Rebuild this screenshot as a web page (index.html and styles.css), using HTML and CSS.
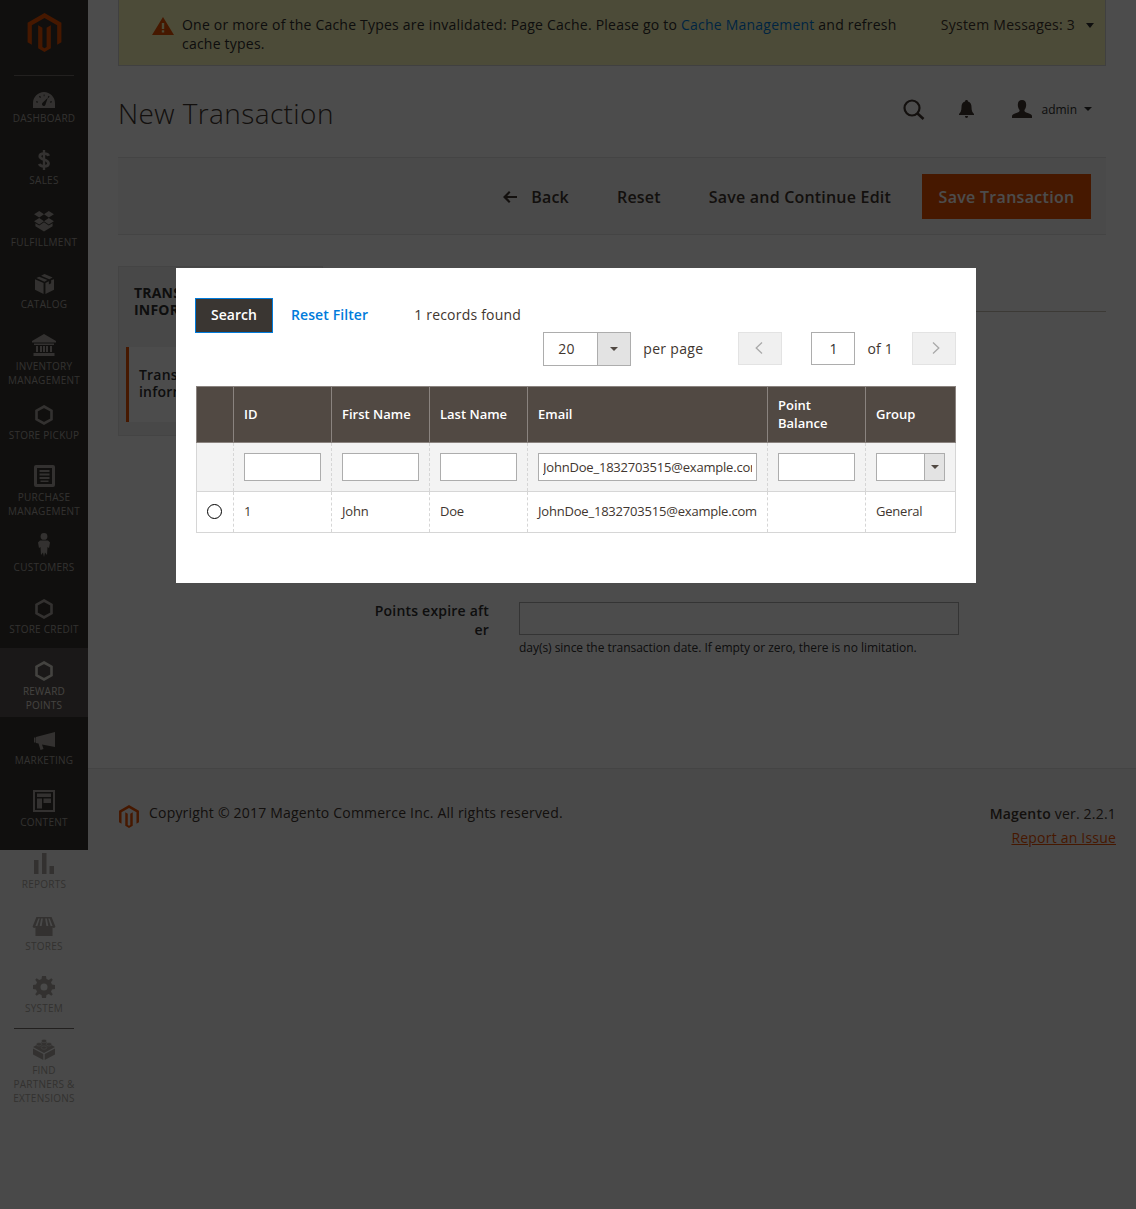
FILE: index.html
```html
<!DOCTYPE html>
<html lang="en">
<head>
    <meta charset="UTF-8">
    <title>New Transaction</title>
    <link rel="stylesheet" href="styles.css">
</head>
<body>
    <nav class="menu">
        <div class="menu-logo">
            <svg width="35" height="39" viewBox="1.6 0 20.8 24"><path class="orange" d="M12 0L22.400 6V18L19.800 19.500V7.500L12 3L4.200 7.500V19.500L1.600 18V6ZM13.300 20.900V9L15.900 7.500V21.700L12 24L8.100 21.700V7.500L10.700 9V20.900L12 21.700Z"/></svg>
        </div>
        <a class="menu-item first">
            <svg class="ico" width="22" height="16" viewBox="0 0 22 16"><path fill-rule="evenodd" d="M11 0C5 0 0 5 0 11V16H22V11C22 5 17 0 11 0ZM6 4.500L7 3.800L8 5.200L7 6ZM10.700 2.500H11.500V4.300H10.700ZM15.600 3.800L16.600 4.600L15.600 6L14.600 5.200ZM18.500 9L19 10.200L17.300 10.800L16.900 9.700ZM3.500 9L5.100 9.700L4.700 10.800L3 10.200ZM14.800 5.800L12.600 12.200A1.800 1.800 0 1 1 9.600 10.800Z"/></svg>
            <span>Dashboard</span>
        </a>
        <a class="menu-item">
            <svg class="ico" width="12" height="20" viewBox="0 0 14 24"><path fill="none" stroke="currentColor" stroke-width="3.400" d="M12.500 7C12 5.200 10 4.400 7 4.400C3.800 4.400 2 5.600 2 7.600C2 12.400 12.400 10.400 12.400 16.200C12.400 18.400 10.400 19.600 7 19.600C4 19.600 2 18.600 1.400 16.600"/><rect x="5.600" y="0" width="2.800" height="24"/></svg>
            <span>Sales</span>
        </a>
        <a class="menu-item">
            <svg class="ico" width="22" height="21" viewBox="0 0 22 22"><path d="M6 0L11 3.400L6 6.800L0.600 3.400ZM16 0L21.400 3.400L16 6.800L11 3.400ZM6 7.400L11 10.800L6 14.200L0.600 10.800ZM16 7.400L21.400 10.800L16 14.200L11 10.800ZM11 11.800L16 15.200L20 12.800V16L11 21.400L2 16V12.800L6 15.200Z"/></svg>
            <span>Fulfillment</span>
        </a>
        <a class="menu-item">
            <svg class="ico" width="19" height="20" viewBox="0 0 20 21"><path d="M10 0L18.600 3.600L15 5.400L6.400 1.800ZM4.400 2.800L13 6.400L10 8L1.400 4.200ZM0 5.400L9 9.400V21L0 16.600ZM20 5.400V16.600L11 21V9.400L14.600 7.600V11L17 9.800V6.600Z"/></svg>
            <span>Catalog</span>
        </a>
        <a class="menu-item">
            <svg class="ico" width="24" height="22" viewBox="0 0 24 22"><path d="M12 0L24 7V8.500H0V7ZM2 9.500H22V11H2ZM4 12H6V18H4ZM8 12H10V18H8ZM14 12H16V18H14ZM18 12H20V18H18ZM11 12H13V18H11ZM1.500 19H22.500V22H1.500Z"/></svg>
            <span>Inventory Management</span>
        </a>
        <a class="menu-item">
            <svg class="ico" width="18" height="20" viewBox="0 0 18 20"><polygon class="hex" points="9,1.500 16.500,5.700 16.500,14.300 9,18.500 1.500,14.300 1.500,5.700"/></svg>
            <span>Store Pickup</span>
        </a>
        <a class="menu-item">
            <svg class="ico" width="21" height="22" viewBox="0 0 21 22"><path fill-rule="evenodd" d="M2 0H19A2 2 0 0 1 21 2V20A2 2 0 0 1 19 22H2A2 2 0 0 1 0 20V2A2 2 0 0 1 2 0ZM3 3V19H18V3ZM5.500 5H15.500V7H5.500ZM5.500 8.500H15.500V10.500H5.500ZM5.500 12H15.500V14H5.500ZM6.500 15.500H14.500V17H6.500Z"/></svg>
            <span>Purchase Management</span>
        </a>
        <a class="menu-item">
            <svg class="ico" width="12" height="24" viewBox="0 0 12 24"><circle cx="6" cy="3.400" r="3.400"/><path d="M2 7.500H10L12 9.500L11 15L9.500 14L9 22L7 19.500L6 24L5 19.500L3 22L2.500 14L1 15L0 9.500Z"/></svg>
            <span>Customers</span>
        </a>
        <a class="menu-item">
            <svg class="ico" width="18" height="20" viewBox="0 0 18 20"><polygon class="hex" points="9,1.500 16.500,5.700 16.500,14.300 9,18.500 1.500,14.300 1.500,5.700"/></svg>
            <span>Store Credit</span>
        </a>
        <a class="menu-item active">
            <svg class="ico" width="18" height="20" viewBox="0 0 18 20"><polygon class="hex" points="9,1.500 16.500,5.700 16.500,14.300 9,18.500 1.500,14.300 1.500,5.700"/></svg>
            <span>Reward Points</span>
        </a>
        <a class="menu-item">
            <svg class="ico" width="21" height="18" viewBox="0 0 21 18"><path d="M21 0V15L8 12.500L9.500 17L6.500 18L4.500 11.500L2 11V5ZM0 5.500H1.500V10.500H0Z"/></svg>
            <span>Marketing</span>
        </a>
        <a class="menu-item">
            <svg class="ico" width="22" height="22" viewBox="0 0 22 22"><path fill-rule="evenodd" d="M0 0H22V22H0ZM2 2V20H20V2ZM4 3.500H18V7H4ZM4 8.500H9V18.500H4ZM10.500 8.500H18V13H10.500Z"/></svg>
            <span>Content</span>
        </a>
        <a class="menu-item">
            <svg class="ico" width="20" height="21" viewBox="0 0 20 21"><path d="M0 7H4.500V21H0ZM8 0H12.500V21H8ZM15.500 13H20V21H15.500Z"/></svg>
            <span>Reports</span>
        </a>
        <a class="menu-item">
            <svg class="ico" width="24" height="19" viewBox="0 0 24 20"><path fill-rule="evenodd" d="M4 0H20L24 10C24 11.500 22 12 21 11V20H3V11C2 12 0 11.500 0 10ZM6 1.500L3 9.500H5L7.500 1.500ZM9 1.500L7.500 9.500H9.500L10.800 1.500ZM13.200 1.500L14.500 9.500H16.500L15 1.500ZM16.500 1.500L19 9.500H21L18 1.500Z"/></svg>
            <span>Stores</span>
        </a>
        <a class="menu-item">
            <svg class="ico" width="22" height="22" viewBox="0 0 22 22"><path fill-rule="evenodd" d="M9 0H13L13.500 3L15.800 4L18.300 2.200L19.800 3.700L18 6.200L19 8.500L22 9V13L19 13.500L18 15.800L19.800 18.300L18.300 19.800L15.800 18L13.500 19L13 22H9L8.500 19L6.200 18L3.700 19.800L2.200 18.300L4 15.800L3 13.500L0 13V9L3 8.500L4 6.200L2.200 3.700L3.700 2.200L6.200 4L8.500 3ZM11 7.500A3.500 3.500 0 1 0 11 14.500A3.500 3.500 0 1 0 11 7.500Z"/></svg>
            <span>System</span>
        </a>
        <a class="menu-item partners">
            <svg class="ico" width="22" height="22" viewBox="0 0 22 22"><path d="M11 3L22 9L11 15L0 9ZM0 10.500L10.300 16V22L0 16.500ZM22 10.500V16.500L11.700 22V16Z"/><g class="studs"><ellipse cx="11" cy="3" rx="2.800" ry="1.700"/><ellipse cx="6" cy="6.300" rx="2.800" ry="1.700"/><ellipse cx="16" cy="6.300" rx="2.800" ry="1.700"/><ellipse cx="11" cy="9.600" rx="2.800" ry="1.700"/></g></svg>
            <span>Find Partners &amp; Extensions</span>
        </a>
    </nav>

    <div class="page-wrapper">
        <div class="page-main">
            <div class="message">
                <svg class="warn" width="22" height="18" viewBox="0 0 22 18"><path fill-rule="evenodd" d="M11 0L22 18H0ZM9.800 6V12H12.200V6ZM9.800 13.200V15.600H12.200V13.200Z"/></svg>
                <p class="message-text">One or more of the Cache Types are invalidated: Page Cache. Please go to <a class="link">Cache Management</a> and refresh cache types.</p>
                <div class="message-count">System Messages: 3 <i class="caret"></i></div>
            </div>

            <header class="page-header">
                <h1>New Transaction</h1>
                <div class="header-tools">
                    <svg class="tool-search" width="22" height="21" viewBox="0 0 22 21"><circle cx="9" cy="9" r="7.500" fill="none" stroke="currentColor" stroke-width="2.200"/><path d="M14 14L20.500 20" stroke="currentColor" stroke-width="2.600"/></svg>
                    <svg class="tool-bell" width="15" height="18" viewBox="0 0 15 18"><path d="M7.500 0C8.500 0 9 .7 9 1.500C11.500 2.200 12.500 4 12.500 7C12.500 11 13.500 12.500 15 14V15H0V14C1.500 12.500 2.500 11 2.500 7C2.500 4 3.500 2.200 6 1.500C6 .7 6.500 0 7.500 0ZM6 16H9C9 17 8.500 18 7.500 18C6.500 18 6 17 6 16Z"/></svg>
                    <div class="user">
                        <svg width="20" height="18" viewBox="0 0 20 18"><path d="M10 0C12.800 0 14.200 2 14.200 4.800C14.200 7 13.500 8.800 12.400 10C12.400 11.500 13 12 15 12.800C18 13.800 20 14.600 20 16V18H0V16C0 14.600 2 13.800 5 12.800C7 12 7.600 11.500 7.600 10C6.500 8.800 5.800 7 5.800 4.800C5.800 2 7.200 0 10 0Z"/></svg>
                        <span>admin</span>
                        <i class="caret small"></i>
                    </div>
                </div>
            </header>

            <div class="page-actions">
                <button class="act-btn back"><svg width="14" height="12" viewBox="0 0 14 12"><path d="M6 0L7.500 1.500L4.200 4.900H14V7.100H4.200L7.500 10.500L6 12L0 6Z"/></svg>Back</button>
                <button class="act-btn">Reset</button>
                <button class="act-btn">Save and Continue Edit</button>
                <button class="act-primary">Save Transaction</button>
            </div>

            <div class="content-cols">
                <aside class="tabs">
                    <div class="tabs-title">Transaction Information</div>
                    <div class="tabs-item">Transaction information</div>
                </aside>
                <section class="form-col">
                    <div class="form-title"></div>
                    <div class="field">
                        <label class="field-label">Points expire after</label>
                        <div class="field-control">
                            <input class="field-input" type="text">
                            <p class="field-note">day(s) since the transaction date. If empty or zero, there is no limitation.</p>
                        </div>
                    </div>
                </section>
            </div>
        </div>

        <footer class="page-footer">
            <div class="copyright">
                <svg width="22" height="23" viewBox="1.600 0 20.800 24"><path class="orange" d="M12 0L22.400 6V18L19.800 19.500V7.500L12 3L4.200 7.500V19.500L1.600 18V6ZM13.300 20.900V9L15.900 7.500V21.700L12 24L8.100 21.700V7.500L10.700 9V20.900L12 21.700Z"/></svg>
                <span>Copyright © 2017 Magento Commerce Inc. All rights reserved.</span>
            </div>
            <div class="version">
                <div><b>Magento</b> ver. 2.2.1</div>
                <a class="report">Report an Issue</a>
            </div>
        </footer>
    </div>

    <div class="overlay"></div>

    <div class="modal">
        <div class="grid-top">
            <button class="search-btn">Search</button>
            <a class="reset-link">Reset Filter</a>
            <span class="records">1 records found</span>
        </div>
        <div class="pager">
            <div class="select-box per-page"><span>20</span><i class="select-arrow"><i class="caret small"></i></i></div>
            <span class="pager-text per">per page</span>
            <button class="page-btn prev"><svg width="8" height="12" viewBox="0 0 8 12"><path d="M7 .5L1.200 6L7 11.500" fill="none" stroke="currentColor" stroke-width="1.300"/></svg></button>
            <input class="page-num" type="text" value="1">
            <span class="pager-text of">of 1</span>
            <button class="page-btn next"><svg width="8" height="12" viewBox="0 0 8 12"><path d="M1 .5L6.800 6L1 11.500" fill="none" stroke="currentColor" stroke-width="1.300"/></svg></button>
        </div>
        <table class="grid">
            <colgroup>
                <col class="c-radio"><col class="c-id"><col class="c-first"><col class="c-last"><col class="c-email"><col class="c-point"><col class="c-group">
            </colgroup>
            <thead>
                <tr>
                    <th></th><th>ID</th><th>First Name</th><th>Last Name</th><th>Email</th><th>Point Balance</th><th>Group</th>
                </tr>
            </thead>
            <tbody>
                <tr class="filters">
                    <td></td>
                    <td><input type="text"></td>
                    <td><input type="text"></td>
                    <td><input type="text"></td>
                    <td><input type="text" value="JohnDoe_1832703515@example.com"></td>
                    <td><input type="text"></td>
                    <td><div class="select-box group-select"><span></span><i class="select-arrow"><i class="caret small"></i></i></div></td>
                </tr>
                <tr class="row">
                    <td class="radio-cell"><input type="radio"></td>
                    <td>1</td>
                    <td>John</td>
                    <td>Doe</td>
                    <td>JohnDoe_1832703515@example.com</td>
                    <td></td>
                    <td>General</td>
                </tr>
            </tbody>
        </table>
    </div>
</body>
</html>
```

FILE: styles.css
```css
* {
    box-sizing: border-box;
}
html, body {
    margin: 0;
    padding: 0;
}
body {
    position: relative;
    height: 1209px;
    overflow: hidden;
    display: flex;
    font-family: "Open Sans", sans-serif;
    font-size: 14px;
    letter-spacing: 0.2px;
    color: #303030;
    background-color: #f5f5f5;
}
p, h1 {
    margin: 0;
}
button {
    font-family: inherit;
    cursor: pointer;
}

/* left menu */
.menu {
    width: 88px;
    height: 850px;
    flex: none;
    background-color: #373330;
    color: #aaa6a0;
}
.menu-logo {
    height: 75px;
    padding-top: 13px;
}
.menu-logo svg {
    display: block;
    margin: 0 auto;
}
.orange {
    fill: #eb5202;
}
.menu-item {
    display: grid;
    grid-template-rows: 37px auto;
    position: relative;
    min-height: 62px;
    padding-bottom: 5px;
    text-align: center;
    font-size: 10px;
    line-height: 13.7px;
    letter-spacing: 0.25px;
    text-transform: uppercase;
}
.menu-item span {
    padding: 0 4px;
    align-self: start;
}
.menu-item.partners span {
    padding: 0 10px;
}
.menu-item .ico {
    align-self: end;
    justify-self: center;
    margin-bottom: 4px;
    fill: currentColor;
}
.menu-item.first::before,
.menu-item.partners::before {
    content: "";
    position: absolute;
    left: 14px;
    right: 14px;
    top: 0;
    border-top: 1px solid #736d68;
}
.menu-item.partners::before {
    top: 1px;
}
.menu-item.active {
    background-color: #575350;
    color: #e3dfd8;
}
.hex {
    fill: none;
    stroke: currentColor;
    stroke-width: 2.600;
}
.studs {
    stroke: #f5f5f5;
    stroke-width: 0.500;
}

/* page */
.page-wrapper {
    flex: 1;
    min-width: 0;
}
.page-main {
    height: 768px;
    padding: 0 30px;
    background-color: #fff;
}
.message {
    display: flex;
    height: 66px;
    padding: 15px 11px 0 33px;
    background-color: #fffbbb;
    border: 1px solid #d6d6d6;
    border-top: none;
    line-height: 19px;
}
.warn {
    flex: none;
    margin-top: 2px;
    fill: #eb5202;
}
.message-text {
    width: 730px;
    margin-left: 8px;
    letter-spacing: 0.22px;
    color: #303030;
}
.link {
    color: #007bdb;
}
.message-count {
    margin-left: auto;
    white-space: nowrap;
    letter-spacing: 0.25px;
    color: #41362f;
}
.caret {
    display: inline-block;
    margin-left: 7px;
    vertical-align: 2px;
    border-style: solid;
    border-width: 5px 4px 0;
    border-color: #303030 transparent transparent;
}
.caret.small {
    border-width: 4.500px 4px 0;
}
.page-header {
    display: flex;
    align-items: center;
    justify-content: space-between;
    height: 91px;
}
h1 {
    margin-top: 3px;
    font-size: 28px;
    font-weight: 300;
    line-height: 36px;
    letter-spacing: 0.4px;
    color: #41362f;
}
.header-tools {
    display: flex;
    align-items: center;
    padding-right: 14px;
    margin-bottom: 5px;
}
.tool-search {
    color: #41362f;
    margin-right: 34px;
}
.tool-bell {
    fill: #41362f;
    margin-right: 38px;
}
.user {
    display: flex;
    align-items: center;
    font-size: 12px;
    letter-spacing: 0;
    fill: #41362f;
}
.user span {
    margin-left: 9px;
}
.page-actions {
    display: flex;
    align-items: center;
    justify-content: flex-end;
    height: 78px;
    padding-right: 15px;
    background-color: #f8f8f8;
    border-top: 1px solid #e3e3e3;
    border-bottom: 1px solid #e3e3e3;
}
.act-btn {
    padding: 2px 0 0;
    margin-right: 48px;
    font-size: 16px;
    font-weight: 600;
    letter-spacing: 0.2px;
    color: #41362f;
    background: none;
    border: none;
}
.act-btn.back svg {
    margin-right: 14px;
    fill: #41362f;
}
.act-btn:nth-child(3) {
    margin-right: 31px;
}
.act-primary {
    width: 169px;
    height: 45px;
    padding: 1px 0 0;
    font-size: 16px;
    font-weight: 600;
    letter-spacing: 0.3px;
    color: #fff;
    background-color: #eb5202;
    border: none;
}
.content-cols {
    display: flex;
    margin-top: 31px;
}
.tabs {
    width: 205px;
    height: 170px;
    flex: none;
    padding: 17px 7px 0;
    background-color: #f1f1f1;
    border: 1px solid #e3e3e3;
}
.tabs-title {
    padding-left: 8px;
    height: 63px;
    font-size: 14px;
    font-weight: 700;
    line-height: 17px;
    text-transform: uppercase;
}
.tabs-item {
    height: 75px;
    padding: 19px 10px;
    font-weight: 600;
    line-height: 17px;
    color: #303030;
    background-color: #fff;
    border-left: 3px solid #eb5202;
}
.form-col {
    flex: 1;
    margin-left: 24px;
}
.form-title {
    height: 46px;
    border-bottom: 1px solid #cac3b4;
}
.field {
    display: flex;
    margin-top: 290px;
}
.field-label {
    width: 118px;
    margin: -1px 0 0 24px;
    font-weight: 600;
    line-height: 19px;
    text-align: right;
    word-break: break-all;
}
.field-control {
    width: 440px;
    margin-left: 30px;
}
.field-input {
    display: block;
    width: 100%;
    height: 33px;
    background-color: #fff;
    border: 1px solid #adadad;
}
.field-note {
    margin-top: 4px;
    font-size: 12px;
    line-height: 17px;
    letter-spacing: -0.04px;
    color: #303030;
}
.page-footer {
    display: flex;
    justify-content: space-between;
    padding: 34px 20px 0 30px;
    border-top: 1px solid #e3e3e3;
}
.copyright {
    display: flex;
    align-items: flex-start;
    color: #41362f;
}
.copyright svg {
    margin-top: 2px;
}
.copyright span {
    margin-left: 9px;
    line-height: 19px;
}
.version {
    margin-top: -1px;
    text-align: right;
    line-height: 24px;
    color: #41362f;
}
.version b {
    font-weight: 600;
}
.report {
    color: #eb5202;
    text-decoration: underline;
}

/* modal */
.overlay {
    position: absolute;
    top: 0;
    left: 0;
    right: 0;
    bottom: 0;
    background-color: rgba(0, 0, 0, 0.7);
}
.modal {
    position: absolute;
    top: 268px;
    left: 176px;
    width: 800px;
    height: 315px;
    padding: 30px 20px 0;
    background-color: #fff;
    opacity: 0.999;
}
.grid-top {
    display: flex;
    align-items: center;
    height: 35px;
    margin-left: -1px;
}
.search-btn {
    width: 78px;
    height: 35px;
    padding: 0 0 2px;
    font-size: 14px;
    font-weight: 600;
    letter-spacing: 0;
    color: #fff;
    background-color: #3a3632;
    border: 1px solid #007bdb;
}
.reset-link {
    margin: -2px 0 0 18px;
    font-weight: 600;
    letter-spacing: 0.1px;
    color: #007bdb;
}
.records {
    margin: -2px 0 0 46px;
    color: #41362f;
}
.pager {
    display: flex;
    align-items: flex-start;
    justify-content: flex-end;
    height: 34px;
    margin-top: -1px;
    color: #41362f;
}
.select-box {
    display: flex;
    background-color: #fff;
    border: 1px solid #adadad;
}
.select-box span {
    flex: 1;
    padding-left: 14px;
}
.select-arrow {
    display: flex;
    align-items: center;
    justify-content: center;
    width: 33px;
    background-color: #e3e3e3;
    border-left: 1px solid #adadad;
}
.select-arrow .caret {
    margin: 0;
    border-top-color: #514943;
}
.per-page {
    width: 88px;
    height: 34px;
    line-height: 32px;
}
.pager-text {
    margin-left: 12px;
    line-height: 34px;
}
.pager-text.per {
    letter-spacing: 0.32px;
}
.page-btn {
    display: flex;
    align-items: center;
    justify-content: center;
    width: 44px;
    height: 33px;
    color: #a9a9a9;
    background-color: #f0f0f0;
    border: 1px solid #e3e3e3;
}
.page-btn.prev {
    margin-left: 35px;
    padding: 0 3px 2px 0;
}
.page-btn.next {
    padding: 0 0 2px 4px;
}
.page-num {
    width: 44px;
    height: 33px;
    margin-left: 29px;
    padding: 0;
    font-family: inherit;
    font-size: 14px;
    color: #303030;
    text-align: center;
    border: 1px solid #adadad;
}
.pager-text.of {
    margin-right: 19px;
}
.grid {
    width: 759px;
    margin-top: 20px;
    table-layout: fixed;
    border-collapse: collapse;
    font-size: 13px;
    letter-spacing: -0.2px;
    color: #41362f;
}
.c-radio { width: 37px; }
.c-id, .c-first, .c-last, .c-point { width: 98px; }
.c-email { width: 240px; }
.c-group { width: 90px; }
.grid th {
    height: 56px;
    padding: 0 10px 2px;
    font-weight: 600;
    line-height: 18px;
    letter-spacing: 0;
    text-align: left;
    color: #fff;
    background-color: #514943;
    border: 1px solid #8a837f;
}
.grid td {
    padding: 0 10px;
    border-left: 1px dashed #d6d6d6;
    border-right: 1px dashed #d6d6d6;
    border-top: 1px solid #d6d6d6;
    border-bottom: 1px solid #d6d6d6;
    white-space: nowrap;
}
.grid td:first-child {
    border-left: 1px solid #d6d6d6;
}
.grid td:last-child {
    border-right: 1px solid #d6d6d6;
}
.filters td {
    height: 49px;
    padding-bottom: 1px;
    background-color: #f3f3f3;
}
.filters input {
    display: block;
    width: 100%;
    height: 28px;
    padding: 0 4px;
    font-family: inherit;
    font-size: 13px;
    letter-spacing: -0.2px;
    color: #41362f;
    border: 1px solid #adadad;
}
.group-select {
    height: 28px;
}
.group-select .select-arrow {
    width: 20px;
}
.row td {
    height: 41px;
    padding-bottom: 2px;
}
.radio-cell input {
    appearance: none;
    display: block;
    width: 15px;
    height: 15px;
    margin: 0;
    background-color: #fff;
    border: 1px solid #000;
    border-radius: 50%;
}
```
